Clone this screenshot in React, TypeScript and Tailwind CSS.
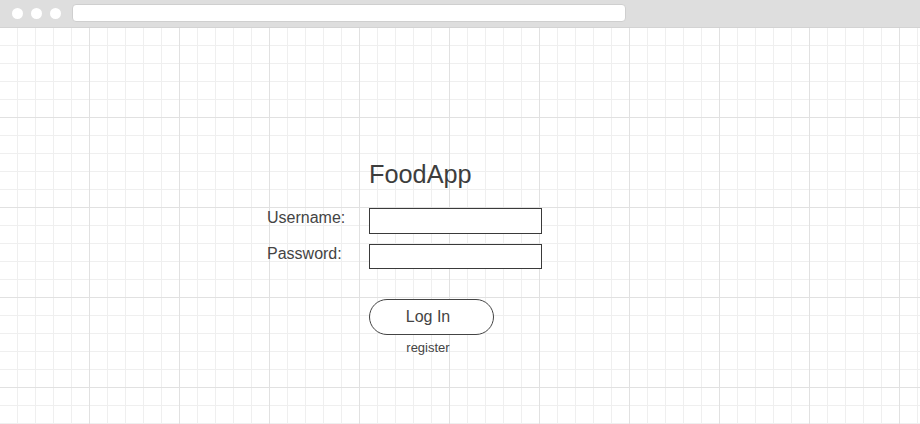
import React from "react";

function BrowserBar() {
  return (
    <div className="h-[28px] shrink-0 bg-[#dedede] border-b border-[#d3d3d3] flex items-center pl-[12px]">
      <div className="flex gap-[8px]">
        <span className="w-[11px] h-[11px] rounded-full bg-white" />
        <span className="w-[11px] h-[11px] rounded-full bg-white" />
        <span className="w-[11px] h-[11px] rounded-full bg-white" />
      </div>
      <div className="ml-[11px] mb-[1px] w-[554px] h-[18px] bg-white rounded-[4px] border border-[#cfcfcf]" />
    </div>
  );
}

export default function App() {
  return (
    <div
      className="w-[920px] h-[424px] flex flex-col overflow-hidden text-[#444]"
      style={{ fontFamily: '"Liberation Sans", Arial, sans-serif' }}
    >
      <BrowserBar />

      <main className="flex-1 bg-white [background-image:linear-gradient(to_right,#e1e1e1_1px,transparent_1px),linear-gradient(to_bottom,#e1e1e1_1px,transparent_1px),linear-gradient(to_right,#efefef_1px,transparent_1px),linear-gradient(to_bottom,#efefef_1px,transparent_1px)] [background-size:90px_90px,90px_90px,18px_18px,18px_18px] [background-position:89px_89px,89px_89px,17px_17px,17px_17px]">
        <div className="pt-[131px] pl-[267px]">
          <div className="flex">
            <div className="w-[102px]" />
            <h1 className="text-[25.3px] leading-[30px] text-[#3d3d3d]">FoodApp</h1>
          </div>

          <form className="mt-[19px] flex flex-col gap-[10px]">
            <div className="flex items-start">
              <label className="w-[102px] pt-[1px] text-[16px] leading-[18px]">Username:</label>
              <input type="text" className="w-[173px] h-[26px] bg-white border border-[#3a3a3a] outline-none px-1 text-sm" />
            </div>
            <div className="flex items-start">
              <label className="w-[102px] pt-[1px] text-[16px] leading-[18px]">Password:</label>
              <input type="password" className="w-[173px] h-[25px] bg-white border border-[#3a3a3a] outline-none px-1 text-sm" />
            </div>

            <div className="flex mt-[20px]">
              <div className="w-[102px]" />
              <div className="flex flex-col">
                <button
                  type="button"
                  className="w-[125px] h-[36px] pr-[7px] rounded-full border border-[#444] bg-white text-[16px] leading-[18px] text-[#444]"
                >
                  Log In
                </button>
                <a className="mt-[5px] pr-[7px] text-center text-[13px] leading-[15px] text-[#444]">register</a>
              </div>
            </div>
          </form>
        </div>
      </main>
    </div>
  );
}
